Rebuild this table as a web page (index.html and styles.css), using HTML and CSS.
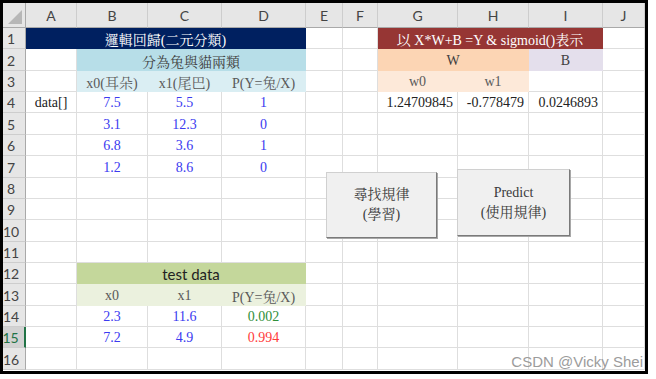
FILE: index.html
```html
<!DOCTYPE html>
<html lang="zh-Hant">
<head>
<meta charset="utf-8">
<title>邏輯回歸(二元分類)</title>
<link rel="stylesheet" href="styles.css">
</head>
<body>
<div class="frame">
  <div class="sheet">
    <div class="row head">
      <div class="c h corner"></div>
      <div class="c h">A</div><div class="c h">B</div><div class="c h">C</div><div class="c h">D</div><div class="c h">E</div>
      <div class="c h">F</div><div class="c h">G</div><div class="c h">H</div><div class="c h">I</div><div class="c h">J</div>
    </div>
    <div class="row">
      <div class="c rh">1</div>
      <div class="c span4 navy">邏輯回歸(二元分類)</div>
      <div class="c"></div><div class="c"></div>
      <div class="c span3 maroon">以 X*W+B =Y &amp; sigmoid()表示</div>
      <div class="c"></div>
    </div>
    <div class="row t">
      <div class="c rh">2</div>
      <div class="c"></div>
      <div class="c span3 blue">分為兔與貓兩類</div>
      <div class="c"></div><div class="c"></div>
      <div class="c span2 peach">W</div>
      <div class="c lavender">B</div>
      <div class="c"></div>
    </div>
    <div class="row">
      <div class="c rh">3</div>
      <div class="c"></div>
      <div class="c lightblue label">x0(耳朵)</div>
      <div class="c lightblue label">x1(尾巴)</div>
      <div class="c lightblue label">P(Y=兔/X)</div>
      <div class="c"></div><div class="c"></div>
      <div class="c lightpeach label">w0</div>
      <div class="c lightpeach label">w1</div>
      <div class="c"></div><div class="c"></div>
    </div>
    <div class="row">
      <div class="c rh">4</div>
      <div class="c plain">data[]</div>
      <div class="c num">7.5</div><div class="c num">5.5</div><div class="c num">1</div>
      <div class="c"></div><div class="c"></div>
      <div class="c plain r">1.24709845</div>
      <div class="c plain r">-0.778479</div>
      <div class="c plain r">0.0246893</div>
      <div class="c"></div>
    </div>
    <div class="row t">
      <div class="c rh">5</div>
      <div class="c"></div>
      <div class="c num">3.1</div><div class="c num">12.3</div><div class="c num">0</div>
      <div class="c"></div><div class="c"></div><div class="c"></div><div class="c"></div><div class="c"></div><div class="c"></div>
    </div>
    <div class="row">
      <div class="c rh">6</div>
      <div class="c"></div>
      <div class="c num">6.8</div><div class="c num">3.6</div><div class="c num">1</div>
      <div class="c"></div><div class="c"></div><div class="c"></div><div class="c"></div><div class="c"></div><div class="c"></div>
    </div>
    <div class="row t">
      <div class="c rh">7</div>
      <div class="c"></div>
      <div class="c num">1.2</div><div class="c num">8.6</div><div class="c num">0</div>
      <div class="c"></div><div class="c"></div><div class="c"></div><div class="c"></div><div class="c"></div><div class="c"></div>
    </div>
    <div class="row">
      <div class="c rh">8</div>
      <div class="c"></div><div class="c"></div><div class="c"></div><div class="c"></div><div class="c"></div>
      <div class="c"></div><div class="c"></div><div class="c"></div><div class="c"></div><div class="c"></div>
    </div>
    <div class="row">
      <div class="c rh">9</div>
      <div class="c"></div><div class="c"></div><div class="c"></div><div class="c"></div><div class="c"></div>
      <div class="c"></div><div class="c"></div><div class="c"></div><div class="c"></div><div class="c"></div>
    </div>
    <div class="row t">
      <div class="c rh">10</div>
      <div class="c"></div><div class="c"></div><div class="c"></div><div class="c"></div><div class="c"></div>
      <div class="c"></div><div class="c"></div><div class="c"></div><div class="c"></div><div class="c"></div>
    </div>
    <div class="row">
      <div class="c rh">11</div>
      <div class="c"></div><div class="c"></div><div class="c"></div><div class="c"></div><div class="c"></div>
      <div class="c"></div><div class="c"></div><div class="c"></div><div class="c"></div><div class="c"></div>
    </div>
    <div class="row">
      <div class="c rh">12</div>
      <div class="c"></div>
      <div class="c span3 green sans">test data</div>
      <div class="c"></div><div class="c"></div><div class="c"></div><div class="c"></div><div class="c"></div><div class="c"></div>
    </div>
    <div class="row t">
      <div class="c rh">13</div>
      <div class="c"></div>
      <div class="c lightgreen label">x0</div>
      <div class="c lightgreen label">x1</div>
      <div class="c lightgreen label">P(Y=兔/X)</div>
      <div class="c"></div><div class="c"></div><div class="c"></div><div class="c"></div><div class="c"></div><div class="c"></div>
    </div>
    <div class="row">
      <div class="c rh">14</div>
      <div class="c"></div>
      <div class="c num">2.3</div><div class="c num">11.6</div><div class="c ok">0.002</div>
      <div class="c"></div><div class="c"></div><div class="c"></div><div class="c"></div><div class="c"></div><div class="c"></div>
    </div>
    <div class="row">
      <div class="c rh sel">15</div>
      <div class="c"></div>
      <div class="c num">7.2</div><div class="c num">4.9</div><div class="c bad">0.994</div>
      <div class="c"></div><div class="c"></div><div class="c"></div><div class="c"></div><div class="c"></div><div class="c"></div>
    </div>
    <div class="row t">
      <div class="c rh">16</div>
      <div class="c"></div><div class="c"></div><div class="c"></div><div class="c"></div><div class="c"></div>
      <div class="c"></div><div class="c"></div><div class="c"></div><div class="c"></div><div class="c"></div>
    </div>
  </div>

  <div class="btn btn-learn">尋找規律<br>(學習)</div>
  <div class="btn btn-predict">Predict<br>(使用規律)</div>
  <div class="watermark">CSDN @Vicky Shei</div>
</div>
</body>
</html>
```

FILE: styles.css
```css
* { box-sizing: border-box; }

body {
  margin: 0;
  background: #fff;
}

.frame {
  position: relative;
  width: 648px;
  height: 374px;
  border: 3px solid #000;
  overflow: hidden;
  background: #fff;
}

.sheet {
  display: flex;
  flex-direction: column;
}

.row {
  display: grid;
  grid-template-columns: 23px 51px 71px 74px 84px 37px 35px 80px 71px 74px 42px;
  height: 21px;
  flex: none;
}
.row.t { height: 22px; }
.row.head { height: 25px; }

.c {
  display: flex;
  align-items: center;
  justify-content: center;
  border-right: 1px solid #dedede;
  border-bottom: 1px solid #dedede;
  font-family: "Liberation Serif", "Noto Serif CJK TC", "Noto Sans CJK TC", serif;
  font-size: 14px;
  color: #222;
  white-space: nowrap;
  overflow: hidden;
  padding-top: 2px;
}

.span2 { grid-column: span 2; }
.span3 { grid-column: span 3; }
.span4 { grid-column: span 4; }

/* headers */
.h {
  background: #e6e6e6;
  border-right-color: #cdcdcd;
  border-bottom-color: #a9a9a9;
  font-family: Lato, "Liberation Sans", sans-serif;
  font-size: 14px;
  color: #444;
  padding-top: 0;
}
.rh {
  background: #e6e6e6;
  border-right-color: #a9a9a9;
  border-bottom-color: #cdcdcd;
  font-family: Lato, "Liberation Sans", sans-serif;
  font-size: 14px;
  color: #444;
  padding: 1px 6px 0 0;
}
.rh.sel {
  background: #d2d2d2;
  color: #217346;
  border-right: 2px solid #217346;
}
.corner { position: relative; border-right-color: #a9a9a9; }
.corner::after {
  content: "";
  position: absolute;
  right: 3px;
  bottom: 3px;
  width: 14px;
  height: 14px;
  background: #b7b7b7;
  clip-path: polygon(100% 0, 100% 100%, 0 100%);
}

/* fills */
.navy { background: #002060; color: #fff; border-color: transparent; }
.maroon { background: #963634; color: #fff; border-color: transparent; }
.blue { background: #b7dee8; color: #404040; border-color: transparent; }
.lightblue { background: #daeef3; border-color: transparent; }
.peach { background: #fcd5b4; color: #404040; border-color: transparent; }
.lightpeach { background: #fde9d9; border-color: transparent; }
.lavender { background: #e4dfec; color: #404040; border-color: transparent; }
.green { background: #c4d79b; border-color: transparent; }
.lightgreen { background: #ebf1de; border-color: transparent; }

.label { color: #595959; }
.plain { color: #222; }
.num { color: #3b3bf0; }
.ok { color: #2f8f3a; }
.bad { color: #ff3b3b; }
.r { justify-content: flex-end; padding-right: 4px; }

.sans {
  font-family: Lato, "Liberation Sans", sans-serif;
  font-size: 15px;
  color: #222;
}

/* form buttons floating over the sheet */
.btn {
  position: absolute;
  display: flex;
  align-items: center;
  justify-content: center;
  text-align: center;
  background: #f0f0f0;
  border: 1px solid #d0d0d0;
  border-right-color: #7a7a7a;
  border-bottom-color: #7a7a7a;
  box-shadow: 1px 1px 0 #a8a8a8;
  font-family: "Liberation Serif", "Noto Serif CJK TC", "Noto Sans CJK TC", serif;
  font-size: 14px;
  line-height: 20px;
  color: #3a3a3a;
}
.btn-learn { left: 323px; top: 169px; width: 111px; height: 66px; }
.btn-predict { left: 454px; top: 166px; width: 113px; height: 67px; }

.watermark {
  position: absolute;
  right: 2px;
  bottom: 0;
  font-family: "Liberation Sans", Arial, sans-serif;
  font-size: 15px;
  line-height: 18px;
  color: #9c9c9c;
}
```
